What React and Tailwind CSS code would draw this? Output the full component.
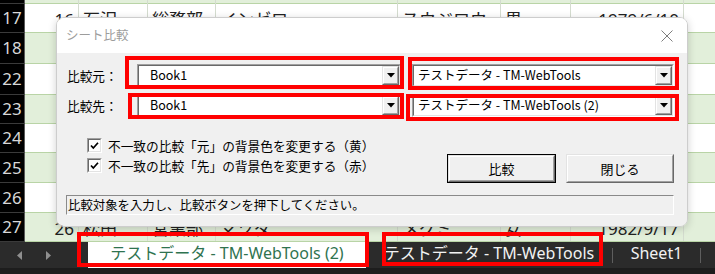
import React from "react";

const COLS = ["w-[54px]", "w-[69px]", "w-[68px]", "w-[182px]", "w-[103px]", "w-[70px]", "w-[113px]"];

const ROWS = [
  { n: "", h: "h-[4px]", green: true },
  { n: "17", h: "h-[29px]", green: false, cells: ["16", "石沢", "総務部", "インゼロ", "スウジロウ", "男", "1979/6/10"] },
  { n: "18", h: "h-[31px]", green: true },
  { n: "22", h: "h-[31px]", green: false },
  { n: "23", h: "h-[29px]", green: true },
  { n: "24", h: "h-[29px]", green: false },
  { n: "25", h: "h-[30px]", green: true },
  { n: "26", h: "h-[30px]", green: false },
  { n: "27", h: "h-[29px]", green: true, cells: ["26", "松田", "営業部", "マツダ", "メグミ", "女", "1982/9/17"] },
];

const CJK = { fontFamily: '"Noto Sans CJK JP", "Noto Sans", sans-serif' };
const SHEET = { fontFamily: '"Noto Sans", "Noto Sans CJK JP", sans-serif' };

function SheetRow({ row }) {
  const cells = row.cells || [];
  return (
    <div className={`flex ${row.h}`}>
      <div className="w-[25px] shrink-0 bg-black border-r border-r-[#5a5a5a] border-b border-b-[#3a3a3a] flex items-center justify-center text-[17px] text-[#d8d8d8]">
        {row.n}
      </div>
      <div className={`flex flex-1 border-b border-b-[#b9d4a6] ${row.green ? "bg-[#e2efda]" : "bg-white"}`}>
        {COLS.map((w, i) => (
          <div
            key={i}
            className={`${w} shrink-0 border-r border-r-[#d4dccf] flex items-center pt-[4px] overflow-hidden whitespace-nowrap text-[17px] text-[#222] ${
              i === 0 || i === 6 ? "justify-end pr-[4px]" : "pl-[4px]"
            }`}
          >
            {cells[i]}
          </div>
        ))}
        <div className="flex-1" />
      </div>
    </div>
  );
}

function Sunken({ className, children }) {
  return (
    <div className={`border border-t-[#a0a0a0] border-l-[#a0a0a0] border-r-white border-b-white ${className}`}>
      <div className="h-full border border-t-[#696969] border-l-[#696969] border-r-[#e3e3e3] border-b-[#e3e3e3] bg-white">
        {children}
      </div>
    </div>
  );
}

function Raised({ className, children }) {
  return (
    <div className={`border border-t-[#e3e3e3] border-l-[#e3e3e3] border-r-[#696969] border-b-[#696969] ${className}`}>
      <div className="h-full border border-t-white border-l-white border-r-[#a0a0a0] border-b-[#a0a0a0] bg-[#f0f0f0] flex items-center justify-center">
        {children}
      </div>
    </div>
  );
}

function Combo({ value, width, pad }) {
  return (
    <Sunken className={`${width} h-[23px]`}>
      <div className="flex h-full items-center">
        <span className={`flex-1 ${pad} text-[12.5px] text-black whitespace-nowrap`}>{value}</span>
        <Raised className="w-[17px] h-[19px]">
          <svg width="8" height="5" viewBox="0 0 8 5">
            <path d="M0 0 H8 L4 4.5 Z" fill="#000" />
          </svg>
        </Raised>
      </div>
    </Sunken>
  );
}

function Check({ label }) {
  return (
    <div className="flex items-center h-[15px]">
      <Sunken className="w-[15px] h-[15px]">
        <svg width="11" height="11" viewBox="0 0 11 11" className="block">
          <path d="M2 5.5 L4.3 8 L9 2.8" stroke="#000" strokeWidth="1.7" fill="none" />
        </svg>
      </Sunken>
      <span className="ml-[6px] text-[12.7px] text-black whitespace-nowrap">{label}</span>
    </div>
  );
}

function RedBox({ className }) {
  return <div className={`absolute border-[4px] border-[#ff0000] pointer-events-none ${className}`} />;
}

export default function App() {
  return (
    <div className="relative w-[715px] h-[274px] overflow-hidden bg-white" style={SHEET}>
      <div className="h-[242px] flex flex-col">
        {ROWS.map((row, i) => (
          <SheetRow key={i} row={row} />
        ))}
      </div>

      {/* sheet tabs */}
      <div className="h-[32px] bg-[#1d1d1d] flex flex-col">
        <div className="h-[26px] bg-[#2b2b2b] flex items-stretch">
          <div className="w-[88px] flex items-center pl-[17px] gap-[24px]">
            <svg width="5" height="9" viewBox="0 0 5 9">
              <path d="M5 0 V9 L0 4.5 Z" fill="#8f8f8f" />
            </svg>
            <svg width="5" height="9" viewBox="0 0 5 9">
              <path d="M0 0 V9 L5 4.5 Z" fill="#8f8f8f" />
            </svg>
          </div>
          <div className="w-[278px] bg-white flex items-center justify-center pb-[4px] text-[16px] text-[#2f7350] whitespace-nowrap">
            テストデータ - TM-WebTools (2)
          </div>
          <div className="w-[246px] flex items-center justify-center pb-[4px] text-[16px] text-[#f2f2f2] whitespace-nowrap">
            テストデータ - TM-WebTools
          </div>
          <div className="w-px h-[15px] self-center bg-[#5e5e5e]" />
          <div className="w-[87px] flex items-center justify-center pb-[4px] text-[16px] text-[#f2f2f2]">Sheet1</div>
          <div className="w-px h-[15px] self-center bg-[#5e5e5e]" />
        </div>
      </div>

      {/* dialog */}
      <div
        className="absolute left-[56px] top-[17px] w-[632px] h-[210px] rounded-[8px] border border-[#cdcdcd] overflow-hidden flex flex-col shadow-[0_2px_8px_rgba(0,0,0,0.18)]"
        style={CJK}
      >
        <div className="h-[35px] bg-white flex items-center justify-between pl-[9px] pr-[14px]">
          <span className="text-[12.5px] text-[#9c9c9c]">シート比較</span>
          <svg width="12" height="12" viewBox="0 0 12 12">
            <path d="M0.5 0.5 L11.5 11.5 M11.5 0.5 L0.5 11.5" stroke="#7d7d7d" strokeWidth="1" />
          </svg>
        </div>
        <div className="flex-1 bg-[#f0f0f0] pl-[9px] pr-[13px] pt-[11px]">
          <div className="flex items-center h-[23px]">
            <span className="w-[71px] pl-[1px] text-[12.7px] text-black">比較元：</span>
            <Combo value="Book1" width="w-[264px]" pad="pl-[11px]" />
            <div className="w-[11px]" />
            <Combo value="テストデータ - TM-WebTools" width="w-[262px]" pad="pl-[4px]" />
          </div>
          <div className="flex items-center h-[23px] mt-[7px]">
            <span className="w-[71px] pl-[1px] text-[12.7px] text-black">比較先：</span>
            <Combo value="Book1" width="w-[264px]" pad="pl-[11px]" />
            <div className="w-[11px]" />
            <Combo value="テストデータ - TM-WebTools (2)" width="w-[262px]" pad="pl-[4px]" />
          </div>

          <div className="flex justify-between h-[45px] mt-[21px]">
            <div className="flex flex-col gap-[5px] pl-[21px]">
              <Check label="不一致の比較「元」の背景色を変更する（黄）" />
              <Check label="不一致の比較「先」の背景色を変更する（赤）" />
            </div>
            <div className="flex items-end gap-[10px]">
              <div className="border border-black">
                <Raised className="w-[107px] h-[27px]">
                  <span className="text-[13px] text-black">比較</span>
                </Raised>
              </div>
              <Raised className="w-[108px] h-[29px]">
                <span className="text-[13px] text-black">閉じる</span>
              </Raised>
            </div>
          </div>

          <div className="mt-[12px] h-[20px] border border-t-[#8a8a8a] border-l-[#8a8a8a] border-r-white border-b-white flex items-center pl-[1px]">
            <span className="text-[12.4px] text-black whitespace-nowrap">比較対象を入力し、比較ボタンを押下してください。</span>
          </div>
        </div>
      </div>

      {/* red annotations */}
      <RedBox className="left-[125px] top-[56px] w-[279px] h-[33px]" />
      <RedBox className="left-[128px] top-[93px] w-[276px] h-[26px]" />
      <RedBox className="left-[408px] top-[57px] w-[271px] h-[33px]" />
      <RedBox className="left-[406px] top-[94px] w-[273px] h-[27px]" />
      <RedBox className="left-[77px] top-[232px] w-[292px] h-[35px]" />
      <RedBox className="left-[382px] top-[232px] w-[221px] h-[34px]" />
    </div>
  );
}
